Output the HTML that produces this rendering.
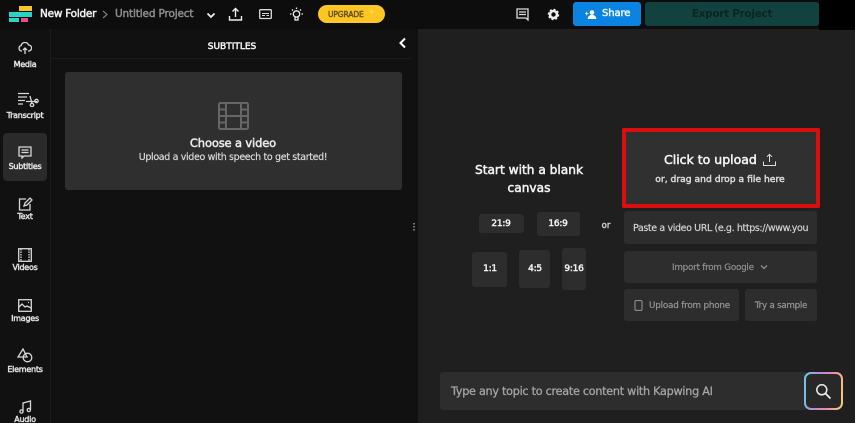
<!DOCTYPE html>
<html><head><meta charset="utf-8">
<style>
html,body{margin:0;padding:0;width:855px;height:423px;overflow:hidden;background:#1f1f1f}
body{position:relative;font-family:"DejaVu Sans","Liberation Sans",sans-serif;color:#eee}
div,span,svg{position:absolute}
.t{white-space:nowrap;line-height:1}
.c{transform:translateX(-50%);text-align:center}
.s{-webkit-text-stroke:.5px currentColor}
.l{font-size:8px;color:#e2e2e2;letter-spacing:-.25px;-webkit-text-stroke:.45px currentColor}
.r{font-size:9px;color:#f2f2f2;letter-spacing:-.25px;-webkit-text-stroke:.5px currentColor}
.b{background:#2d2d2d;border-radius:3px}
svg{fill:none;stroke:#d8d8d8;stroke-width:1.3}
</style></head><body>
<!-- top bar -->
<div style="left:0;top:0;width:855px;height:29px;background:#0d0d0d"></div>
<div style="left:819px;top:0;width:36px;height:30px;background:#000"></div>
<!-- sidebar + panel -->
<div style="left:0;top:29px;width:50px;height:394px;background:#111"></div>
<div style="left:50px;top:29px;width:1px;height:394px;background:#1d1d1d"></div>
<div style="left:51px;top:29px;width:367px;height:394px;background:#111"></div>
<div style="left:51px;top:58px;width:360px;height:1px;background:#1c1c1c"></div>
<!-- logo -->
<div style="left:19px;top:6px;width:13px;height:5px;background:#f5c52c"></div>
<div style="left:9px;top:12px;width:23px;height:5px;background:#2ad4c4"></div>
<div style="left:9px;top:18px;width:10px;height:4px;background:#2ad4c4"></div>
<div style="left:21px;top:18px;width:7px;height:4px;background:#e84d85"></div>
<div class="t s" style="left:40px;top:9px;font-size:10.500px;color:#f0f0f0;letter-spacing:-.25px">New Folder</div>
<svg style="left:102px;top:10px" width="6" height="9" viewBox="0 0 6 9"><path d="M1 1l4 3.500L1 8" stroke="#777"/></svg>
<div class="t s" style="left:115px;top:9px;font-size:10.500px;color:#8b8b8b;letter-spacing:-.15px">Untitled Project</div>
<svg style="left:206px;top:12px" width="10" height="7" viewBox="0 0 10 7"><path d="M1.500 1.500L5 5l3.500-3.500" stroke="#eee" stroke-width="1.800"/></svg>
<svg style="left:228px;top:7px" width="15" height="15" viewBox="0 0 15 15"><path d="M7.500 10V1.500M4.500 4.500l3-3 3 3M1.500 9v4h12V9" stroke="#eee" stroke-width="1.400"/></svg>
<svg style="left:259px;top:9px" width="13" height="11" viewBox="0 0 13 11"><rect x=".7" y=".7" width="11.600" height="8.800" rx="1" stroke="#ddd"/><path d="M3 6.500h3M7.500 6.500h2.500M3 4.500h7" stroke="#ddd" stroke-width="1"/></svg>
<svg style="left:289px;top:7px" width="15" height="15" viewBox="0 0 15 15"><circle cx="7.500" cy="7" r="3.200" stroke="#eee"/><path d="M6 10.500v2.500h3v-2.500M7.500 .5v1.500M1 7h1.500M12.500 7H14M3 2.500l1 1M12 2.500l-1 1" stroke="#eee"/></svg>
<div style="left:318px;top:5px;width:67px;height:18px;border-radius:9px;background:#fdc623"></div>
<div class="t s" style="left:328px;top:11px;font-size:7.500px;color:#6b5510;letter-spacing:-.1px">UPGRADE</div>
<div class="t" style="left:368px;top:9px;font-size:9px;color:#fde58a;opacity:.6">✦</div>
<svg style="left:516px;top:8px" width="13" height="13" viewBox="0 0 13 13"><path d="M1 1h11v11l-2-2H1zM3 4h7M3 6.500h7" stroke="#ddd"/></svg>
<svg style="left:547px;top:8px" width="13" height="13" viewBox="0 0 13 13"><circle cx="6.500" cy="6.500" r="3.500" stroke="#eee" stroke-width="2.600"/><circle cx="6.500" cy="6.500" r="5" stroke="#eee" stroke-width="1.500" stroke-dasharray="2 1.900"/></svg>
<div style="left:573px;top:2px;width:68px;height:24px;border-radius:3px;background:#0a84e0"></div>
<svg style="left:585px;top:10px" width="12" height="9" viewBox="0 0 12 9"><circle cx="7" cy="2.500" r="2.300" fill="#fff" stroke="none"/><path d="M3 9c0-5 8-5 8 0zM0 3.500h3.500M1.700 1.800v3.400" fill="#fff" stroke="#fff" stroke-width=".8"/></svg>
<div class="t s" style="left:602px;top:9px;font-size:10px;color:#e8f3fc;letter-spacing:-.1px">Share</div>
<div style="left:645px;top:2px;width:174px;height:24px;border-radius:3px;background:#12423f"></div>
<div class="t c" style="left:732px;top:9px;font-size:10.500px;font-weight:700;color:#0b2523;letter-spacing:-.3px">Export Project</div>
<!-- sidebar items -->
<div style="left:3px;top:133px;width:44px;height:48px;border-radius:4px;background:#2a2a2a"></div>
<svg style="left:18px;top:42px" width="14" height="13" viewBox="0 0 14 13"><path d="M4 9H3.500a2.800 2.800 0 0 1-.3-5.500A3.800 3.800 0 0 1 10.500 3a3 3 0 0 1 .2 6H10M7 12V6M5 8l2-2 2 2"/></svg>
<div class="t c l" style="left:25px;top:61px">Media</div>
<svg style="left:17px;top:92px" width="22" height="15" viewBox="0 0 22 15"><path d="M1 1.500h11M1 5h9M1 8.500h7M1 12h5M9 9.500h11"/><circle cx="15" cy="13" r="1.700"/><circle cx="19.500" cy="9" r="1.700"/><path d="M13 4l2 7.500"/></svg>
<div class="t c l" style="left:25px;top:112px">Transcript</div>
<svg style="left:18px;top:146px" width="14" height="13" viewBox="0 0 14 13"><path d="M1 1h12v9H6l-2 2v-2H1zM3.500 4h7M3.500 6.500h7"/></svg>
<div class="t c l" style="left:25px;top:163px">Subtitles</div>
<svg style="left:18px;top:197px" width="15" height="14" viewBox="0 0 15 14"><path d="M8 2H1.500v11h10.500V7M6 9l1-3 5-5 2 2-5 5z"/></svg>
<div class="t c l" style="left:25px;top:213px">Text</div>
<svg style="left:18px;top:248px" width="14" height="14" viewBox="0 0 14 14"><rect x=".7" y=".7" width="12.600" height="12.600"/><path d="M3 1v12M11 1v12" stroke-dasharray="1.500 1"/></svg>
<div class="t c l" style="left:25px;top:264px">Videos</div>
<svg style="left:18px;top:299px" width="14" height="13" viewBox="0 0 14 13"><rect x=".7" y=".7" width="12.600" height="11.600"/><path d="M1 8l3-3 3 3 2-1 4 2M10 3.500h1"/></svg>
<div class="t c l" style="left:25px;top:315px">Images</div>
<svg style="left:17px;top:348px" width="16" height="15" viewBox="0 0 16 15"><path d="M6 1L1 9h9z"/><circle cx="10.500" cy="9.500" r="4.300"/></svg>
<div class="t c l" style="left:25px;top:366px">Elements</div>
<svg style="left:19px;top:400px" width="13" height="14" viewBox="0 0 13 14"><path d="M4 11.500V3l7.500-2v9"/><circle cx="2.500" cy="11.500" r="1.600"/><circle cx="9.800" cy="10" r="1.600"/></svg>
<div class="t c l" style="left:25px;top:416px">Audio</div>
<!-- panel -->
<div class="t c s" style="left:232px;top:43px;font-size:9px;color:#f2f2f2">SUBTITLES</div>
<svg style="left:398px;top:37px" width="9" height="12" viewBox="0 0 9 12"><path d="M7 1.500L2.500 6 7 10.500" stroke="#fff" stroke-width="2"/></svg>
<div style="left:65px;top:72px;width:337px;height:118px;border-radius:3px;background:#2f2f2f"></div>
<svg style="left:218px;top:102px" width="31" height="29" viewBox="0 0 31 29"><rect x="1" y="1" width="29" height="26" rx="1.500" stroke="#666" stroke-width="2"/><path d="M8 1v26M23 1v26M1 7.500h7M1 14h29M1 20.500h7M23 7.500h7M23 20.500h7" stroke="#666" stroke-width="2"/></svg>
<div class="t c s" style="left:233px;top:138px;font-size:11.500px;color:#ececec;letter-spacing:-.15px">Choose a video</div>
<div class="t c" style="left:233px;top:153px;font-size:9.500px;color:#dedede;letter-spacing:-.35px;-webkit-text-stroke:.15px currentColor">Upload a video with speech to get started!</div>
<!-- divider handle -->
<div style="left:413px;top:223px;width:2px;height:8px;background:repeating-linear-gradient(#777 0 1.500px,transparent 1.500px 3px)"></div>
<!-- blank canvas -->
<div class="t c s" style="left:529px;top:161px;font-size:12.200px;color:#f4f4f4;line-height:18px">Start with a blank<br>canvas</div>
<div class="b" style="left:479px;top:214px;width:45px;height:19px"></div>
<div class="t c r" style="left:501px;top:220px">21:9</div>
<div class="b" style="left:537px;top:212px;width:43px;height:24px"></div>
<div class="t c r" style="left:558px;top:220px">16:9</div>
<div class="b" style="left:472px;top:252px;width:35px;height:35px"></div>
<div class="t c r" style="left:490px;top:265px">1:1</div>
<div class="b" style="left:519px;top:250px;width:31px;height:38px"></div>
<div class="t c r" style="left:535px;top:265px">4:5</div>
<div class="b" style="left:562px;top:248px;width:24px;height:42px"></div>
<div class="t c r" style="left:574px;top:265px">9:16</div>
<div class="t c s" style="left:606px;top:222px;font-size:8.500px;color:#c8c8c8">or</div>
<!-- upload box -->
<div style="left:622px;top:128px;width:198px;height:80px;box-sizing:border-box;border:4px solid #d90f0f;border-radius:2px;background:#303030"></div>
<div class="t s" style="left:664px;top:154px;font-size:12.500px;color:#f4f4f4">Click to upload</div>
<svg style="left:762px;top:153px" width="15" height="14" viewBox="0 0 15 14"><path d="M7.500 9V1.500M5 3.800l2.500-2.500L10 3.800M1.500 8.500v4h12v-4" stroke="#ddd" stroke-width="1"/></svg>
<div class="t c s" style="left:720px;top:175px;font-size:9.200px;color:#d8d8d8">or, drag and drop a file here</div>
<div class="b" style="left:624px;top:211px;width:193px;height:33px"></div>
<div class="t" style="left:633px;top:224px;font-size:9.500px;color:#d6d6d6;letter-spacing:-.38px;-webkit-text-stroke:.15px currentColor">Paste a video URL (e.g. https://www.you</div>
<div class="b" style="left:624px;top:251px;width:193px;height:32px"></div>
<div class="t" style="left:672px;top:264px;font-size:8.800px;color:#949494;letter-spacing:-.25px;-webkit-text-stroke:.15px currentColor">Import from Google</div>
<svg style="left:760px;top:264px" width="8" height="6" viewBox="0 0 8 6"><path d="M1 1.500l3 3 3-3" stroke="#8e8e8e"/></svg>
<div class="b" style="left:624px;top:289px;width:115px;height:32px"></div>
<svg style="left:634px;top:300px" width="9" height="11" viewBox="0 0 9 11"><rect x="1" y=".6" width="7" height="9.800" rx="1" stroke="#999" stroke-width="1"/></svg>
<div class="t" style="left:649px;top:302px;font-size:8.800px;color:#9a9a9a;letter-spacing:-.2px;-webkit-text-stroke:.15px currentColor">Upload from phone</div>
<div class="b" style="left:745px;top:289px;width:72px;height:32px"></div>
<div class="t c" style="left:781px;top:302px;font-size:8.800px;color:#9a9a9a;letter-spacing:-.3px;-webkit-text-stroke:.15px currentColor">Try a sample</div>
<!-- AI bar -->
<div style="left:440px;top:372px;width:366px;height:38px;border-radius:3px 0 0 3px;background:#2d2d2d"></div>
<div class="t" style="left:451px;top:386px;font-size:11.200px;color:#a4a4a4;letter-spacing:-.26px;-webkit-text-stroke:.3px currentColor">Type any topic to create content with Kapwing AI</div>
<div style="left:804px;top:372px;width:39px;height:38px;box-sizing:border-box;border-radius:7px;padding:2px;background:linear-gradient(100deg,#63d2e2 0%,#b58be0 35%,#ea86b8 62%,#fbd16d 100%)"><div style="left:2px;top:2px;width:35px;height:34px;border-radius:5px;background:#282828"></div></div>
<svg style="left:814px;top:382px" width="19" height="19" viewBox="0 0 19 19"><circle cx="7.800" cy="7.800" r="5" stroke="#eee" stroke-width="1.500"/><path d="M11.500 11.500L16.500 16.500" stroke="#eee" stroke-width="1.700"/></svg>
</body></html>
